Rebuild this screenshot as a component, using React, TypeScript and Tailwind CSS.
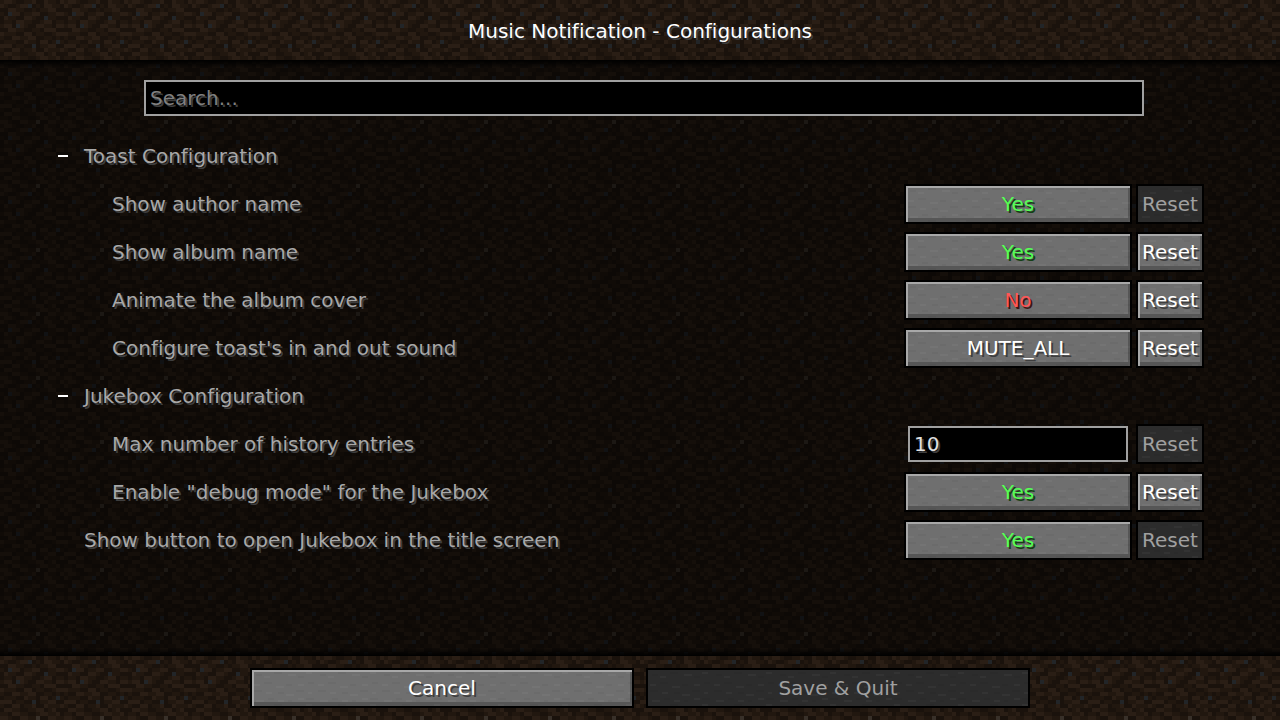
const dirt = [
  "2332112231132213",
  "3211233512133221",
  "1133221121223311",
  "2153312233112233",
  "1322113321152211",
  "1221332211233122",
  "2331532113322133",
  "1133221122133311",
  "3222113312211233",
  "2113322331122121",
  "1222113221331252",
  "3331221151223311",
  "2113312231132223",
  "1332211223312311",
  "2213322112332231",
  "3321133224113322",
];

const shades: Record<string, string> = {
  "1": "#1a120c",
  "2": "#21170f",
  "3": "#2a1e15",
  "4": "#383029",
  "5": "#222528",
};

// x, y and width of each streak in one stone tile
const darkStreaks = [
  [4, 4, 6], [22, 2, 8], [46, 6, 6], [12, 12, 8], [34, 14, 6], [56, 12, 6],
  [2, 20, 8], [26, 22, 6], [44, 20, 8], [16, 28, 6], [54, 28, 8], [36, 30, 4],
];
const lightStreaks = [
  [12, 6, 6], [36, 4, 8], [54, 2, 6], [2, 14, 6], [24, 16, 8], [46, 14, 6],
  [14, 22, 6], [34, 24, 8], [56, 22, 4], [4, 30, 8], [26, 30, 6], [46, 28, 6],
];

const textShadow = "[text-shadow:2px_2px_0_#3e3e3e]";

function Dirt({ id, className = "" }: { id: string; className?: string }) {
  return (
    <svg aria-hidden="true" className={`pointer-events-none absolute inset-0 -z-10 h-full w-full ${className}`} shapeRendering="crispEdges">
      <defs>
        <pattern id={id} width="64" height="64" patternUnits="userSpaceOnUse">
          {dirt.map((row, y) =>
            [...row].map((shade, x) => <rect key={`${x}-${y}`} x={x * 4} y={y * 4} width="4" height="4" fill={shades[shade]} />)
          )}
        </pattern>
      </defs>
      <rect width="100%" height="100%" fill={`url(#${id})`} />
    </svg>
  );
}

function StonePattern() {
  return (
    <svg aria-hidden="true" className="absolute h-0 w-0">
      <defs>
        <pattern id="stone" width="64" height="32" patternUnits="userSpaceOnUse">
          {darkStreaks.map(([x, y, w]) => <rect key={`${x}-${y}`} x={x} y={y} width={w} height="2" fill="#000" fillOpacity="0.04" />)}
          {lightStreaks.map(([x, y, w]) => <rect key={`${x}-${y}`} x={x} y={y} width={w} height="2" fill="#fff" fillOpacity="0.03" />)}
        </pattern>
      </defs>
    </svg>
  );
}

type ButtonProps = {
  children: string;
  className?: string;
  disabled?: boolean;
  label?: string;
};

function StoneButton({ children, className = "", disabled = false, label }: ButtonProps) {
  const look = disabled
    ? "bg-[#2c2c2c] text-[#a0a0a0]"
    : "bg-[#6f6f6f] shadow-[inset_2px_2px_0_#a8a8a8,inset_-2px_-4px_0_#565656]";

  return (
    <button type="button" disabled={disabled} aria-label={label} className={`relative isolate h-10 border-2 border-black text-center whitespace-nowrap ${look} ${className}`}>
      <svg aria-hidden="true" className="absolute inset-0 -z-10 h-full w-full" shapeRendering="crispEdges">
        <rect width="100%" height="100%" fill="url(#stone)" />
      </svg>
      {children}
    </button>
  );
}

type Option = {
  name: string;
  value: string;
  changed?: boolean;
  input?: boolean;
  top?: boolean;
};

const toast: Option[] = [
  { name: "Show author name", value: "Yes" },
  { name: "Show album name", value: "Yes", changed: true },
  { name: "Animate the album cover", value: "No", changed: true },
  { name: "Configure toast's in and out sound", value: "MUTE_ALL", changed: true },
];

const jukebox: Option[] = [
  { name: "Max number of history entries", value: "10", input: true },
  { name: 'Enable "debug mode" for the Jukebox', value: "Yes", changed: true },
];

function valueColor(value: string) {
  if (value === "Yes") return "text-[#55ff55] [text-shadow:2px_2px_0_#153f15]";
  if (value === "No") return "text-[#ff5555] [text-shadow:2px_2px_0_#3f1515]";
  return `text-white ${textShadow}`;
}

function OptionRow({ name, value, changed = false, input = false, top = false }: Option) {
  return (
    <div className={`flex h-12 items-center ${top ? "pl-7" : "pl-14"}`}>
      {input ? (
        <label htmlFor="history" className="flex-1">{name}</label>
      ) : (
        <span className="flex-1">{name}</span>
      )}
      {input ? (
        <div className="flex w-57 justify-center">
          <input id="history" defaultValue={value} className={`h-9 w-55 border-2 border-[#a0a0a0] bg-black px-1 text-[#e0e0e0] outline-none ${textShadow}`} />
        </div>
      ) : (
        <StoneButton label={`${name}: ${value}`} className={`w-57 ${valueColor(value)}`}>{value}</StoneButton>
      )}
      <StoneButton label={`Reset ${name}`} disabled={!changed} className={`ml-1 w-17 ${changed ? `text-white ${textShadow}` : ""}`}>Reset</StoneButton>
    </div>
  );
}

function Category({ title, options }: { title: string; options: Option[] }) {
  return (
    <section>
      <h2>
        <button type="button" aria-expanded="true" className={`flex h-12 items-center pl-0.5 ${textShadow}`}>
          <span className="mr-4 h-0.5 w-2.5 bg-white" />
          {title}
        </button>
      </h2>
      {options.map((option) => <OptionRow key={option.name} {...option} />)}
    </section>
  );
}

export default function App() {
  return (
    <div className="flex min-h-screen flex-col bg-black font-['DejaVu_Sans',sans-serif] text-xl leading-6 text-[#a8a8a8] [font-variant-ligatures:none]">
      <StonePattern />
      <header className="relative isolate flex h-15 items-center justify-center pt-0.5">
        <Dirt id="dirt-top" />
        <h1 className={`text-white ${textShadow}`}>Music Notification - Configurations</h1>
      </header>

      <main className="relative isolate flex-1 pt-5">
        <Dirt id="dirt-list" className="opacity-50" />
        <div className="absolute inset-x-0 top-0 -z-10 h-2 bg-linear-to-b from-black to-transparent" />
        <div className="absolute inset-x-0 bottom-0 -z-10 h-2 bg-linear-to-t from-black to-transparent" />
        <div className="mr-34 ml-36">
          <input type="search" aria-label="Search" placeholder="Search..." className={`h-9 w-full border-2 border-[#a0a0a0] bg-black px-1 outline-none placeholder:text-[#808080] ${textShadow}`} />
        </div>
        <div className={`mt-4 mr-19 ml-14 ${textShadow}`}>
          <Category title="Toast Configuration" options={toast} />
          <Category title="Jukebox Configuration" options={jukebox} />
          <OptionRow top name="Show button to open Jukebox in the title screen" value="Yes" />
        </div>
      </main>

      <footer className="relative isolate flex h-16 items-center justify-center gap-3">
        <Dirt id="dirt-bottom" />
        <StoneButton className={`w-96 text-white ${textShadow}`}>Cancel</StoneButton>
        <StoneButton disabled className="w-96">Save & Quit</StoneButton>
      </footer>
    </div>
  );
}
